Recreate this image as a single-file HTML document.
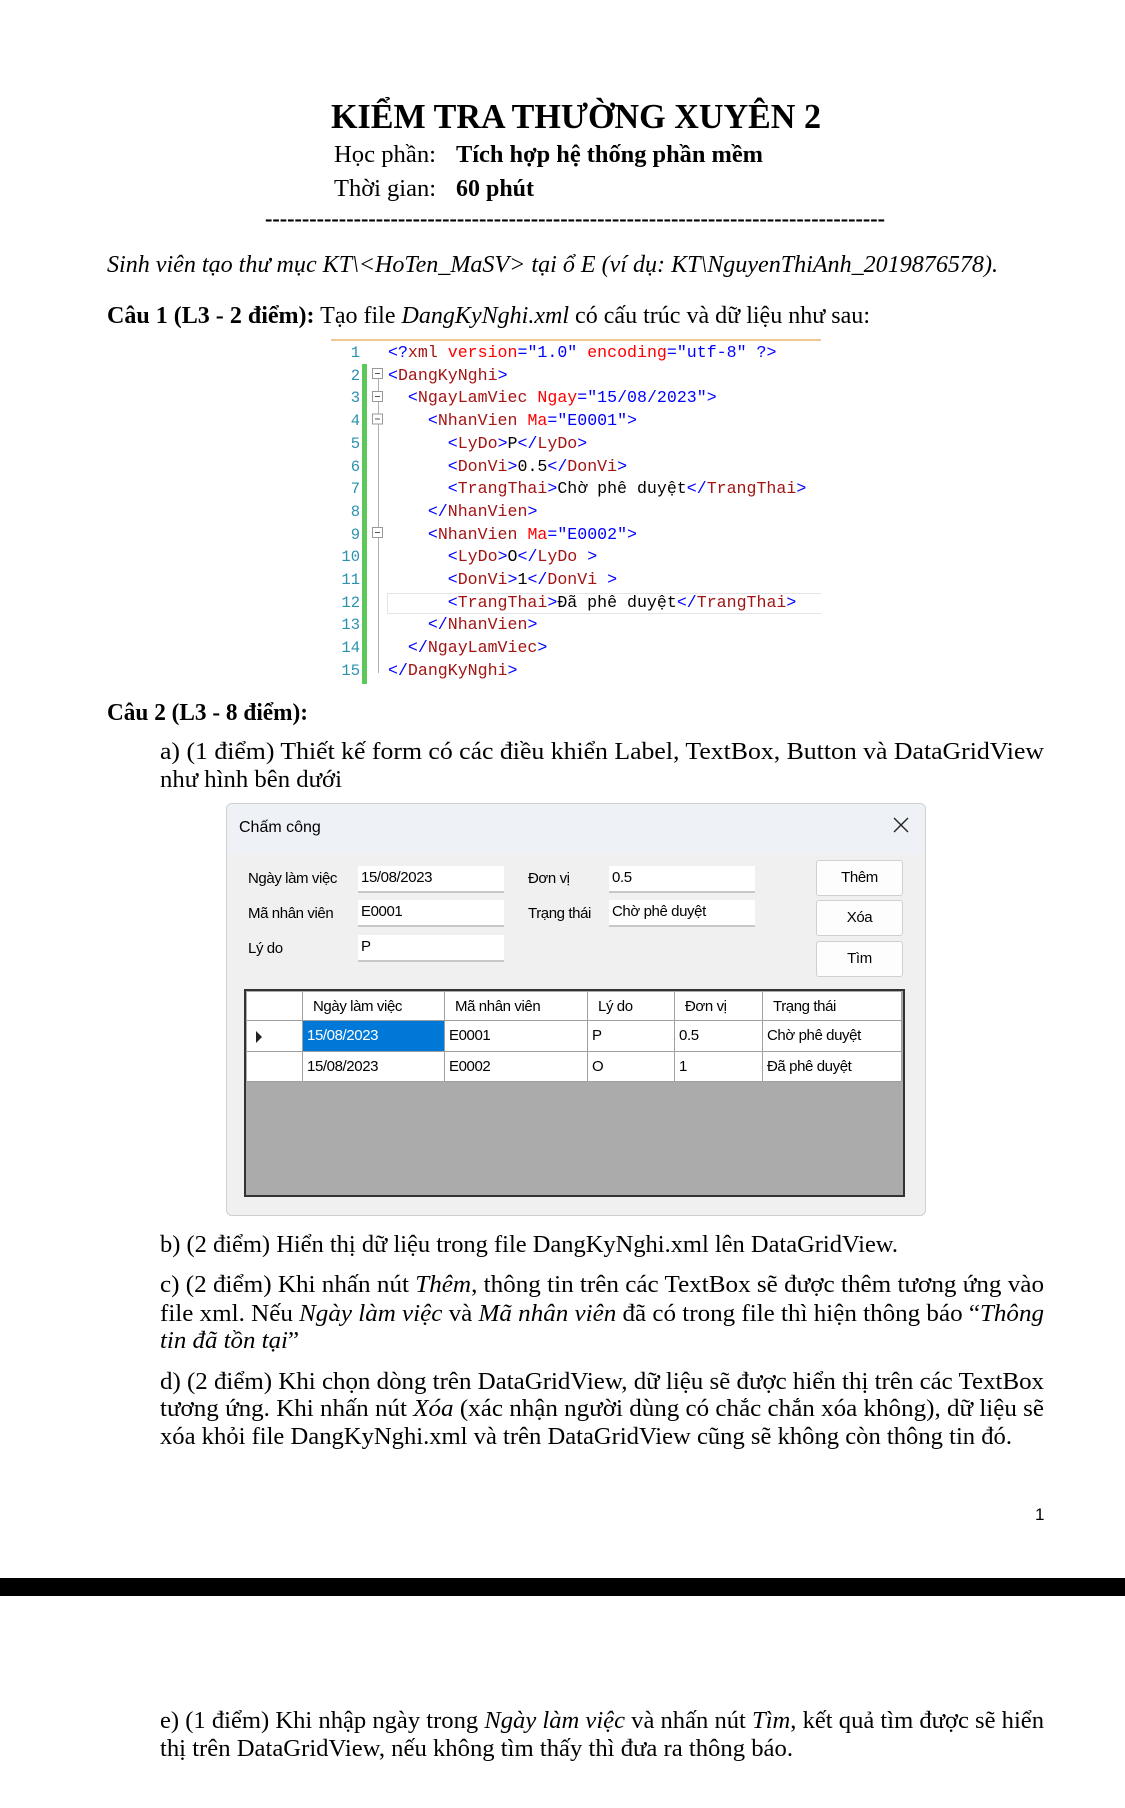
<!DOCTYPE html>
<html><head><meta charset="utf-8">
<style>
html,body{margin:0;padding:0;background:#fff;}
body{width:1125px;height:1808px;position:relative;overflow:hidden;font-family:"Liberation Serif",serif;color:#000;}
.a{position:absolute;white-space:nowrap;}
.t{font-size:24px;line-height:24px;margin-top:2px;}
.fit{display:inline-block;transform-origin:0 0;}
.code{position:absolute;font-family:"Liberation Mono",monospace;font-size:16.6px;line-height:22.7px;white-space:pre;}
.ln{color:#2b91af;text-align:right;width:30px;font-size:15.5px;}
.d{color:#0000ff}.n{color:#a31515}.r{color:#ff0000}.v{color:#0000ff}
.f{font-family:"Liberation Sans",sans-serif;font-size:15px;letter-spacing:-0.4px;color:#000;}
.tb{position:absolute;background:#fff;border-bottom:2px solid #c8c8c8;box-sizing:border-box;padding-left:3px;line-height:24px;}
.btn{position:absolute;background:#fdfdfd;border:1px solid #d0d0d0;border-radius:3px;box-sizing:border-box;text-align:center;line-height:34px;}
.cell{position:absolute;box-sizing:border-box;border-right:1px solid #a0a0a0;border-bottom:1px solid #a0a0a0;padding-left:4px;line-height:30px;background:#fff;}
</style></head><body>

<div class="a" style="left:331px;top:98px;font-size:35px;line-height:38px;font-weight:bold;"><span class="fit" style="width:490px">KIỂM TRA THƯỜNG XUYÊN 2</span></div>
<div class="a t" style="left:334px;top:141px;"><span class="fit" style="width:102px">Học phần:</span></div>
<div class="a t" style="left:456px;top:141px;font-weight:bold;"><span class="fit" style="width:307px">Tích hợp hệ thống phần mềm</span></div>
<div class="a t" style="left:334px;top:175px;"><span class="fit" style="width:102px">Thời gian:</span></div>
<div class="a t" style="left:456px;top:175px;font-weight:bold;"><span class="fit" style="width:78px">60 phút</span></div>
<div class="a t" style="left:265px;top:205px;font-weight:bold;overflow:hidden;width:620px;"><span class="fit" style="width:620px">------------------------------------------------------------------------------------</span></div>

<div class="a t" style="left:107px;top:251px;font-style:italic;"><span class="fit" style="width:891px">Sinh viên tạo thư mục KT\&lt;HoTen_MaSV&gt; tại ổ E (ví dụ: KT\NguyenThiAnh_2019876578).</span></div>
<div class="a t" style="left:107px;top:302px;"><span class="fit" style="width:763px"><b>Câu 1 (L3 - 2 điểm):</b> Tạo file <i>DangKyNghi.xml</i> có cấu trúc và dữ liệu như sau:</span></div>

<!-- code -->
<div style="position:absolute;left:331px;top:339px;width:490px;height:2px;background:#f0c890;"></div>
<div style="position:absolute;left:362px;top:364px;width:5px;height:320px;background:#5cc85c;"></div>
<div style="position:absolute;left:387px;top:593px;width:434px;height:21px;border:1px solid #e4e4e4;border-right:none;box-sizing:border-box;"></div>
<div style="position:absolute;left:378px;top:375px;width:1px;height:298px;background:#b0b0b0;"></div>
<svg style="position:absolute;left:372px;top:364px" width="14" height="200">
<g fill="#fff" stroke="#999" stroke-width="1">
<rect x="0.5" y="4.5" width="10" height="10"/><rect x="0.5" y="27.5" width="10" height="10"/><rect x="0.5" y="50" width="10" height="10"/><rect x="0.5" y="163.5" width="10" height="10"/></g>
<g stroke="#555"><line x1="3" y1="9.5" x2="8" y2="9.5"/><line x1="3" y1="32.5" x2="8" y2="32.5"/><line x1="3" y1="55" x2="8" y2="55"/><line x1="3" y1="168.5" x2="8" y2="168.5"/></g></svg>
<div class="code ln" style="left:330px;top:342px;">1
2
3
4
5
6
7
8
9
10
11
12
13
14
15</div>
<div class="code" style="left:388px;top:342px;"><span class="d">&lt;?</span><span class="n">xml</span> <span class="r">version</span><span class="d">="1.0"</span> <span class="r">encoding</span><span class="d">="utf-8"</span> <span class="d">?&gt;</span>
<span class="d">&lt;</span><span class="n">DangKyNghi</span><span class="d">&gt;</span>
  <span class="d">&lt;</span><span class="n">NgayLamViec</span> <span class="r">Ngay</span><span class="d">="15/08/2023"&gt;</span>
    <span class="d">&lt;</span><span class="n">NhanVien</span> <span class="r">Ma</span><span class="d">="E0001"&gt;</span>
      <span class="d">&lt;</span><span class="n">LyDo</span><span class="d">&gt;</span>P<span class="d">&lt;/</span><span class="n">LyDo</span><span class="d">&gt;</span>
      <span class="d">&lt;</span><span class="n">DonVi</span><span class="d">&gt;</span>0.5<span class="d">&lt;/</span><span class="n">DonVi</span><span class="d">&gt;</span>
      <span class="d">&lt;</span><span class="n">TrangThai</span><span class="d">&gt;</span>Chờ phê duyệt<span class="d">&lt;/</span><span class="n">TrangThai</span><span class="d">&gt;</span>
    <span class="d">&lt;/</span><span class="n">NhanVien</span><span class="d">&gt;</span>
    <span class="d">&lt;</span><span class="n">NhanVien</span> <span class="r">Ma</span><span class="d">="E0002"&gt;</span>
      <span class="d">&lt;</span><span class="n">LyDo</span><span class="d">&gt;</span>O<span class="d">&lt;/</span><span class="n">LyDo</span> <span class="d">&gt;</span>
      <span class="d">&lt;</span><span class="n">DonVi</span><span class="d">&gt;</span>1<span class="d">&lt;/</span><span class="n">DonVi</span> <span class="d">&gt;</span>
      <span class="d">&lt;</span><span class="n">TrangThai</span><span class="d">&gt;</span>Đã phê duyệt<span class="d">&lt;/</span><span class="n">TrangThai</span><span class="d">&gt;</span>
    <span class="d">&lt;/</span><span class="n">NhanVien</span><span class="d">&gt;</span>
  <span class="d">&lt;/</span><span class="n">NgayLamViec</span><span class="d">&gt;</span>
<span class="d">&lt;/</span><span class="n">DangKyNghi</span><span class="d">&gt;</span></div>

<div class="a t" style="left:107px;top:699px;font-weight:bold;"><span class="fit" style="width:201px">Câu 2 (L3 - 8 điểm):</span></div>
<div class="a t" style="left:160px;top:738px;"><span class="fit" style="width:884px">a) (1 điểm) Thiết kế form có các điều khiển Label, TextBox, Button và DataGridView</span></div>
<div class="a t" style="left:160px;top:766px;"><span class="fit" style="width:182px">như hình bên dưới</span></div>

<!-- form -->
<div style="position:absolute;left:226px;top:803px;width:700px;height:413px;background:#f0f0f0;border:1px solid #cfcfcf;border-radius:6px;box-sizing:border-box;overflow:hidden;">
 <div style="position:absolute;left:0;top:0;width:700px;height:50px;background:#eef2f7;"></div>
 <div class="a f" style="left:12px;top:15px;font-size:16px;letter-spacing:0;">Chấm công</div>
 <svg style="position:absolute;left:666px;top:13px" width="16" height="16"><path d="M1 1L15 15M15 1L1 15" stroke="#222" stroke-width="1.4"/></svg>
</div>
<div class="a f" style="left:248px;top:870px;">Ngày làm việc</div>
<div class="a f" style="left:248px;top:905px;">Mã nhân viên</div>
<div class="a f" style="left:248px;top:940px;">Lý do</div>
<div class="a f" style="left:528px;top:870px;">Đơn vị</div>
<div class="a f" style="left:528px;top:905px;">Trạng thái</div>
<div class="tb f" style="left:358px;top:866px;width:146px;height:27px;">15/08/2023</div>
<div class="tb f" style="left:358px;top:900px;width:146px;height:27px;">E0001</div>
<div class="tb f" style="left:358px;top:935px;width:146px;height:27px;">P</div>
<div class="tb f" style="left:609px;top:866px;width:146px;height:27px;">0.5</div>
<div class="tb f" style="left:609px;top:900px;width:146px;height:27px;">Chờ phê duyệt</div>
<div class="btn f" style="left:816px;top:860px;width:87px;height:36px;">Thêm</div>
<div class="btn f" style="left:816px;top:900px;width:87px;height:36px;">Xóa</div>
<div class="btn f" style="left:816px;top:941px;width:87px;height:36px;">Tìm</div>

<div style="position:absolute;left:244px;top:989px;width:661px;height:208px;background:#ababab;border:2px solid #333;box-sizing:border-box;"></div>
<div class="cell f" style="left:247px;top:992px;width:56px;height:29px;"></div>
<div class="cell f" style="left:303px;top:992px;width:142px;height:29px;padding-left:10px;">Ngày làm việc</div>
<div class="cell f" style="left:445px;top:992px;width:143px;height:29px;padding-left:10px;">Mã nhân viên</div>
<div class="cell f" style="left:588px;top:992px;width:87px;height:29px;padding-left:10px;">Lý do</div>
<div class="cell f" style="left:675px;top:992px;width:88px;height:29px;padding-left:10px;">Đơn vị</div>
<div class="cell f" style="left:763px;top:992px;width:139px;height:29px;padding-left:10px;">Trạng thái</div>

<div class="cell f" style="left:247px;top:1021px;width:56px;height:31px;"><svg style="position:absolute;left:8px;top:10px" width="8" height="12"><path d="M1 0L7 6L1 12Z" fill="#222"/></svg></div>
<div class="cell f" style="left:303px;top:1021px;width:142px;height:31px;background:#0078d7;color:#fff;">15/08/2023</div>
<div class="cell f" style="left:445px;top:1021px;width:143px;height:31px;">E0001</div>
<div class="cell f" style="left:588px;top:1021px;width:87px;height:31px;">P</div>
<div class="cell f" style="left:675px;top:1021px;width:88px;height:31px;">0.5</div>
<div class="cell f" style="left:763px;top:1021px;width:139px;height:31px;">Chờ phê duyệt</div>

<div class="cell f" style="left:247px;top:1052px;width:56px;height:30px;"></div>
<div class="cell f" style="left:303px;top:1052px;width:142px;height:30px;">15/08/2023</div>
<div class="cell f" style="left:445px;top:1052px;width:143px;height:30px;">E0002</div>
<div class="cell f" style="left:588px;top:1052px;width:87px;height:30px;">O</div>
<div class="cell f" style="left:675px;top:1052px;width:88px;height:30px;">1</div>
<div class="cell f" style="left:763px;top:1052px;width:139px;height:30px;">Đã phê duyệt</div>

<div class="a t" style="left:160px;top:1231px;"><span class="fit" style="width:738px">b) (2 điểm) Hiển thị dữ liệu trong file DangKyNghi.xml lên DataGridView.</span></div>
<div class="a t" style="left:160px;top:1271px;"><span class="fit" style="width:884px">c) (2 điểm) Khi nhấn nút <i>Thêm</i>, thông tin trên các TextBox sẽ được thêm tương ứng vào</span></div>
<div class="a t" style="left:160px;top:1300px;"><span class="fit" style="width:884px">file xml. Nếu <i>Ngày làm việc</i> và <i>Mã nhân viên</i> đã có trong file thì hiện thông báo “<i>Thông</i></span></div>
<div class="a t" style="left:160px;top:1327px;"><span class="fit" style="width:139px"><i>tin đã tồn tại</i>”</span></div>
<div class="a t" style="left:160px;top:1368px;"><span class="fit" style="width:884px">d) (2 điểm) Khi chọn dòng trên DataGridView, dữ liệu sẽ được hiển thị trên các TextBox</span></div>
<div class="a t" style="left:160px;top:1395px;"><span class="fit" style="width:884px">tương ứng. Khi nhấn nút <i>Xóa</i> (xác nhận người dùng có chắc chắn xóa không), dữ liệu sẽ</span></div>
<div class="a t" style="left:160px;top:1423px;"><span class="fit" style="width:852px">xóa khỏi file DangKyNghi.xml và trên DataGridView cũng sẽ không còn thông tin đó.</span></div>

<div class="a" style="left:1035px;top:1505px;font-size:17px;font-family:'Liberation Sans',sans-serif;">1</div>
<div style="position:absolute;left:0;top:1578px;width:1125px;height:18px;background:#000;"></div>

<div class="a t" style="left:160px;top:1707px;"><span class="fit" style="width:884px">e) (1 điểm) Khi nhập ngày trong <i>Ngày làm việc</i> và nhấn nút <i>Tìm</i>, kết quả tìm được sẽ hiển</span></div>
<div class="a t" style="left:160px;top:1735px;"><span class="fit" style="width:633px">thị trên DataGridView, nếu không tìm thấy thì đưa ra thông báo.</span></div>

<script>
document.querySelectorAll('.fit').forEach(function(e){
  var w=parseFloat(e.style.width);e.style.width='auto';
  var r=e.getBoundingClientRect().width;
  if(r>0){e.style.transform='scaleX('+(w/r)+')';}
});
</script>
</body></html>
